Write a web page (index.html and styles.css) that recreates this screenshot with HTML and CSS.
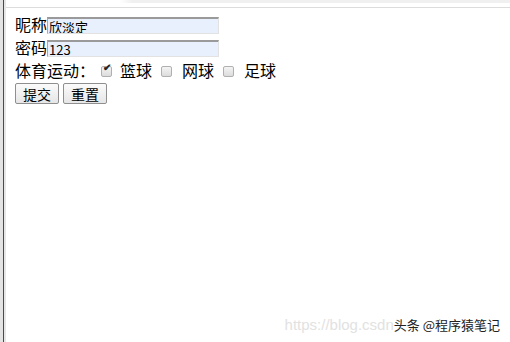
FILE: index.html
```html
<!DOCTYPE html>
<html lang="en">

<head>
    <meta charset="UTF-8">
    <meta name="viewport" content="width=device-width, initial-scale=1.0">
    <title>表单</title>
    <link rel="stylesheet" href="styles.css">
</head>

<body>
    <div class="side"></div>
    <div class="main">
        <div class="topbar"><div class="tab"></div></div>
        <form class="form">
            <div class="row">昵称<input class="txt" type="text" value="欣淡定"></div>
            <div class="row">密码<input class="txt" type="text" value="123"></div>
            <div class="row">体育运动：<input class="ck first" type="checkbox" checked>篮球<input class="ck" type="checkbox">网球<input class="ck" type="checkbox">足球</div>
            <div class="btns">
                <button type="button" class="btn">提交</button>
                <button type="reset" class="btn">重置</button>
            </div>
        </form>
    </div>
    <div class="mark"><span class="url">https://blog.csdn</span><span class="who">头条 @程序猿笔记</span></div>
</body>

</html>
```

FILE: styles.css
```css
* {
    margin: 0;
    padding: 0;
}

body {
    width: 510px;
    height: 342px;
    display: flex;
    background: #fff;
    font-family: "Noto Sans CJK SC", sans-serif;
    font-size: 16px;
    color: #000;
    position: relative;
    overflow: hidden;
}

.side {
    width: 1px;
    border-left: 3px solid #e3e3e3;
    border-right: 2px solid #e6e6e6;
    background: #4a4a4a;
}

.main {
    flex: 1;
}

.topbar {
    height: 7px;
    border-bottom: 1px solid #dcdcdc;
}

.tab {
    height: 3px;
    margin-left: 114px;
    background: linear-gradient(90deg, #fff, #f0f0f0 12px);
}

.form {
    padding: 5px 0 0 9px;
}

.row {
    height: 23px;
    line-height: 23px;
    display: flex;
    align-items: center;
}

.txt {
    width: 172px;
    height: 17px;
    box-sizing: border-box;
    border-top: 2px solid #9a9a9a;
    border-left: 1px solid #a8a8a8;
    border-right: 1px solid #e2e2e2;
    border-bottom: 1px solid #e2e2e2;
    background: #e8f0fe;
    font-family: "Noto Sans CJK SC", sans-serif;
    font-size: 13px;
    padding-left: 1px;
    outline: none;
    margin-top: 2px;
}

.ck {
    appearance: none;
    width: 11px;
    height: 11px;
    border: 1px solid #b0b0b0;
    border-radius: 2px;
    background: linear-gradient(#f4f4f4, #dcdcdc);
    margin: 1px 10px 0 9px;
    position: relative;
}

.ck.first {
    margin-left: 6px;
    margin-right: 8px;
}

.ck:checked::after {
    content: "✔";
    position: absolute;
    left: 1px;
    top: -5px;
    font-size: 10px;
    font-weight: bold;
    color: #222;
}

.btns {
    display: flex;
    gap: 4px;
    padding-top: 1px;
}

.btn {
    width: 44px;
    height: 21px;
    border: 1px solid #8f8f8f;
    border-radius: 2px;
    background: linear-gradient(#fbfbfb, #e6e6e6);
    font-family: "Noto Sans CJK SC", sans-serif;
    font-size: 14px;
    line-height: 18px;
    color: #000;
}

.mark {
    position: absolute;
    right: 10px;
    bottom: 8px;
    display: flex;
    align-items: center;
}

.url {
    font-family: "Liberation Sans", sans-serif;
    color: #e2e2e2;
    font-size: 15px;
    white-space: nowrap;
}

.who {
    font-size: 13px;
    color: #222;
    text-shadow: 0 0 2px #fff, 0 0 2px #fff;
}
```
